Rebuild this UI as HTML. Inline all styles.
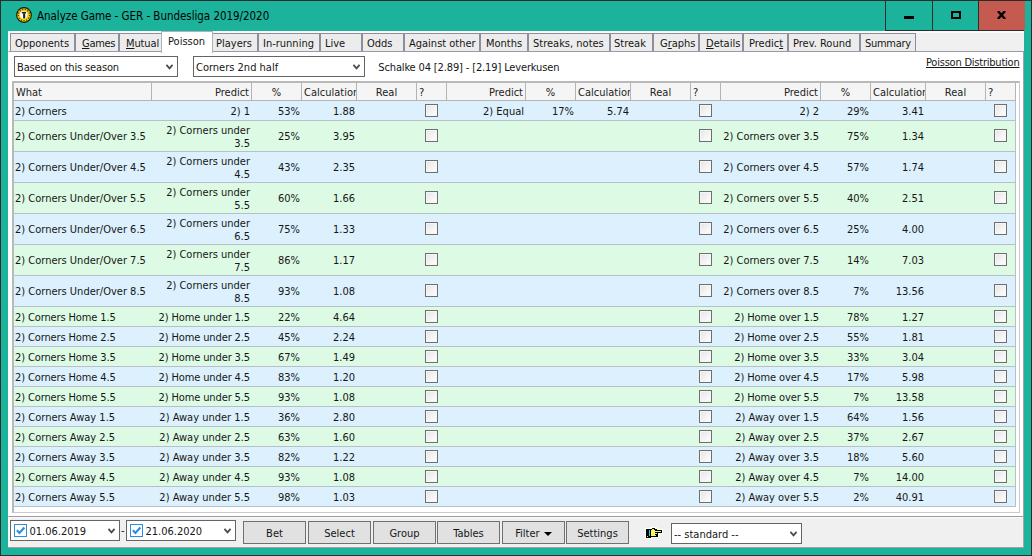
<!DOCTYPE html><html><head><meta charset="utf-8"><title>Analyze Game</title><style>
*{box-sizing:border-box;margin:0;padding:0}
html,body{width:1032px;height:556px;overflow:hidden}
body{background:#1bb39b;font-family:"DejaVu Sans Condensed","Liberation Sans",sans-serif;font-size:11px;color:#161616;position:relative}
.abs{position:absolute}
#frame{position:absolute;left:0;top:0;width:1032px;height:556px;border:1px solid #2c2c2c}
#title{color:#000;position:absolute;left:37px;top:8px;font-size:11.5px;line-height:16px;white-space:nowrap;letter-spacing:-0.04px}
#client{position:absolute;left:8px;top:31px;width:1016px;height:517px;background:#f0f0f0}
.tab{position:absolute;top:2px;height:19px;border:1px solid #8d8d9b;border-bottom:none;background:#ececec;line-height:17px;text-align:left;white-space:nowrap;padding-top:1px;overflow:hidden}
.tab.sel{top:0;height:22px;background:#fff;z-index:3;border-color:#b0b0b8;line-height:18px}
#page{position:absolute;left:0;top:20px;width:1016px;height:466px;background:#fff;border-top:1px solid #9a9aa6;border-bottom:1px solid #9a9aa6;border-left:1px solid #fff;border-right:1px solid #a2a2aa}
.combo{position:absolute;height:21px;border:1px solid #646464;background:#fff;line-height:21px;padding-left:2px;white-space:nowrap}
.combo svg{position:absolute;right:4px;top:7px}
u{text-decoration:underline}
#grid{position:absolute;left:4px;top:50px;width:1008px;height:432px;border:2px solid #b9b9b9;border-right:1px solid #c9c9c9;border-bottom:1px solid #c9c9c9;background:#fff}
#gridin{position:absolute;left:0;top:0;width:1005px;height:429px;overflow:hidden}
.hc{position:absolute;top:0;height:18px;background:#f5f5f5;border-right:1px solid #b4b4b4;border-bottom:1px solid #b4b4b4;line-height:19px;white-space:nowrap;overflow:hidden;padding:0 2px;color:#222}
.row{position:absolute;left:0;width:1002px;border-bottom:1px solid #b9bfc6;border-right:1px solid #b9bfc6}
.row.b{background:#dcf1fd}
.row.g{background:#ddfbe4}
.c{position:absolute;line-height:13px;padding:0 2px 0 1px;white-space:nowrap}
.ls{letter-spacing:-0.12px}
.c.r{text-align:right}
.c.l{text-align:left}
.cb{position:absolute;width:13px;height:13px;border:1px solid #6f6f6f;background:linear-gradient(135deg,#e4e4e4 0%,#f4f4f4 55%,#fff 100%);box-shadow:inset 0 0 0 1px #f6f6f6}
.btn{position:absolute;top:490px;height:23px;width:63px;border:1px solid #707070;background:#e1e1e1;text-align:center;line-height:23px}
.date{position:absolute;top:489px;height:21px;width:110px;border:1px solid #646464;background:#fff;line-height:21px;padding-left:18.5px;white-space:nowrap}
.dcb{position:absolute;left:3px;top:3px;width:13px;height:13px;border:1px solid #2b8de0;background:#fff}
</style></head><body>
<div id="frame"></div>
<svg class="abs" style="left:16px;top:7px" width="16" height="16" viewBox="0 0 16 16">
<circle cx="8" cy="8" r="7.9" fill="#15130a"/>
<circle cx="8" cy="8" r="6.8" fill="#f4c802"/>
<circle cx="8" cy="8" r="5.7" fill="none" stroke="#4a3800" stroke-width="1.4" stroke-dasharray="1.1 1.6"/>
<circle cx="7.6" cy="7.8" r="3.9" fill="#fff"/>
<rect x="5.8" y="4.9" width="4.2" height="1.6" fill="#222"/>
<rect x="7.1" y="6.3" width="2.1" height="5.1" fill="#222"/>
</svg>
<div id="title">Analyze Game - GER - Bundesliga 2019/2020</div>
<div class="abs" style="left:885px;top:1px;width:139px;height:30px;border-left:1px solid #2c2c2c;border-bottom:1px solid #2c2c2c"></div>
<div class="abs" style="left:932px;top:1px;width:1px;height:29px;background:#2c2c2c"></div>
<div class="abs" style="left:978px;top:1px;width:1px;height:29px;background:#2c2c2c"></div>
<div class="abs" style="left:979px;top:1px;width:46px;height:29px;background:#c55a50"></div>
<div class="abs" style="left:904px;top:16px;width:10px;height:3px;background:#000"></div>
<div class="abs" style="left:951px;top:11px;width:10px;height:8px;border:2px solid #000"></div>
<svg class="abs" style="left:997px;top:11px" width="9" height="8" viewBox="0 0 9 8"><path d="M0.9 0 L8.1 8 M8.1 0 L0.9 8" stroke="#000" stroke-width="2.4" fill="none"/></svg>
<div id="client">
<div class="abs" style="left:0;top:0;width:1016px;height:2px;background:#fafafa"></div>
<div class="abs" style="left:0;top:0;width:2px;height:517px;background:#fafafa"></div>
<div class="abs" style="left:0;top:516px;width:1016px;height:1px;background:#a0a0a0"></div>
<div class="abs" style="left:1015px;top:486px;width:1px;height:31px;background:#a6a6a6"></div>
<div class="abs" style="left:2px;top:486px;width:1013px;height:1px;background:#fbfbfb"></div>
<div class="tab" style="left:2px;width:65px;padding-left:4px">Opponents</div>
<div class="tab" style="left:67px;width:44px;padding-left:6px"><span style="letter-spacing:-0.3px"><u>G</u>ames</span></div>
<div class="tab" style="left:111px;width:44px;padding-left:6px"><span style="letter-spacing:-0.12px"><u>M</u>utual</span></div>
<div class="tab" style="left:203px;width:47px;padding-left:4px">Players</div>
<div class="tab" style="left:250px;width:62px;padding-left:4px">In-running</div>
<div class="tab" style="left:312px;width:42px;padding-left:4px">Live</div>
<div class="tab" style="left:354px;width:42px;padding-left:4px">Odds</div>
<div class="tab" style="left:396px;width:76px;padding-left:4px">Against other</div>
<div class="tab" style="left:472px;width:48px;padding-left:5px">Months</div>
<div class="tab" style="left:520px;width:82px;padding-left:4px">Streaks, notes</div>
<div class="tab" style="left:602px;width:43px;padding-left:3px">Streak</div>
<div class="tab" style="left:645px;width:46px;padding-left:6px">G<u>r</u>aphs</div>
<div class="tab" style="left:691px;width:44px;padding-left:6px"><u>D</u>etails</div>
<div class="tab" style="left:735px;width:45px;padding-left:5px">Predic<u>t</u></div>
<div class="tab" style="left:780px;width:72px;padding-left:4px">Prev. Round</div>
<div class="tab" style="left:852px;width:56px;padding-left:4px"><span style="letter-spacing:-0.3px">Summary</span></div>
<div id="page">
</div>
<div class="tab sel" style="left:153px;width:52px;padding-left:6px">Poisson</div>
<div class="combo" style="left:6px;top:25px;width:164px"><span style="letter-spacing:-0.15px">Based on this season</span><svg width="7" height="6" viewBox="0 0 7 6"><path d="M0.4 0.8 L3.5 4.3 L6.6 0.8" fill="none" stroke="#4a4a4a" stroke-width="1.8"/></svg></div>
<div class="combo" style="left:185px;top:25px;width:172px">Corners 2nd half<svg width="7" height="6" viewBox="0 0 7 6"><path d="M0.4 0.8 L3.5 4.3 L6.6 0.8" fill="none" stroke="#4a4a4a" stroke-width="1.8"/></svg></div>
<div class="abs" style="left:370.3px;top:30px;white-space:nowrap;line-height:13px;letter-spacing:-0.14px">Schalke 04 [2.89] - [2.19] Leverkusen</div>
<div class="abs" style="left:918px;top:25px;white-space:nowrap;line-height:13px;text-decoration:underline;letter-spacing:-0.22px">Poisson Distribution</div>
<div id="grid"><div id="gridin">
<div class="hc" style="left:0px;width:138px;text-align:left">What</div>
<div class="hc" style="left:138px;width:100px;text-align:right">Predict</div>
<div class="hc" style="left:238px;width:50px;text-align:center">%</div>
<div class="hc" style="left:288px;width:55px;text-align:left">Calculation</div>
<div class="hc" style="left:343px;width:60px;text-align:center">Real</div>
<div class="hc" style="left:403px;width:30px;text-align:left">?</div>
<div class="hc" style="left:433px;width:79px;text-align:right">Predict</div>
<div class="hc" style="left:512px;width:50px;text-align:center">%</div>
<div class="hc" style="left:562px;width:55px;text-align:left">Calculation</div>
<div class="hc" style="left:617px;width:60px;text-align:center">Real</div>
<div class="hc" style="left:677px;width:30px;text-align:left">?</div>
<div class="hc" style="left:707px;width:100px;text-align:right">Predict</div>
<div class="hc" style="left:807px;width:50px;text-align:center">%</div>
<div class="hc" style="left:857px;width:55px;text-align:left">Calculation</div>
<div class="hc" style="left:912px;width:60px;text-align:center">Real</div>
<div class="hc" style="left:972px;width:30px;text-align:left">?</div>
<div class="row b" style="top:18px;height:20px">
<div class="c l" style="left:0px;width:138px;top:4px">2) Corners</div>
<div class="c r" style="left:138px;width:100px;top:4px">2) 1</div>
<div class="c r" style="left:238px;width:50px;top:4px">53%</div>
<div class="c r" style="left:288px;width:55px;top:4px">1.88</div>
<div class="c r" style="left:433px;width:79px;top:4px">2) Equal</div>
<div class="c r" style="left:512px;width:50px;top:4px">17%</div>
<div class="c r" style="left:562px;width:55px;top:4px">5.74</div>
<div class="c r" style="left:707px;width:100px;top:4px">2) 2</div>
<div class="c r" style="left:807px;width:50px;top:4px">29%</div>
<div class="c r" style="left:857px;width:55px;top:4px">3.41</div>
<div class="cb" style="left:411px;top:3px"></div>
<div class="cb" style="left:685px;top:3px"></div>
<div class="cb" style="left:980px;top:3px"></div>
</div>
<div class="row g" style="top:38px;height:31px">
<div class="c l" style="left:0px;width:138px;top:9px">2) Corners Under/Over 3.5</div>
<div class="c r" style="left:138px;width:100px;top:3px">2) Corners under<br>3.5</div>
<div class="c r" style="left:238px;width:50px;top:9px">25%</div>
<div class="c r" style="left:288px;width:55px;top:9px">3.95</div>
<div class="c r" style="left:707px;width:100px;top:9px">2) Corners over 3.5</div>
<div class="c r" style="left:807px;width:50px;top:9px">75%</div>
<div class="c r" style="left:857px;width:55px;top:9px">1.34</div>
<div class="cb" style="left:411px;top:8px"></div>
<div class="cb" style="left:685px;top:8px"></div>
<div class="cb" style="left:980px;top:8px"></div>
</div>
<div class="row b" style="top:69px;height:31px">
<div class="c l" style="left:0px;width:138px;top:9px">2) Corners Under/Over 4.5</div>
<div class="c r" style="left:138px;width:100px;top:3px">2) Corners under<br>4.5</div>
<div class="c r" style="left:238px;width:50px;top:9px">43%</div>
<div class="c r" style="left:288px;width:55px;top:9px">2.35</div>
<div class="c r" style="left:707px;width:100px;top:9px">2) Corners over 4.5</div>
<div class="c r" style="left:807px;width:50px;top:9px">57%</div>
<div class="c r" style="left:857px;width:55px;top:9px">1.74</div>
<div class="cb" style="left:411px;top:8px"></div>
<div class="cb" style="left:685px;top:8px"></div>
<div class="cb" style="left:980px;top:8px"></div>
</div>
<div class="row g" style="top:100px;height:31px">
<div class="c l" style="left:0px;width:138px;top:9px">2) Corners Under/Over 5.5</div>
<div class="c r" style="left:138px;width:100px;top:3px">2) Corners under<br>5.5</div>
<div class="c r" style="left:238px;width:50px;top:9px">60%</div>
<div class="c r" style="left:288px;width:55px;top:9px">1.66</div>
<div class="c r" style="left:707px;width:100px;top:9px">2) Corners over 5.5</div>
<div class="c r" style="left:807px;width:50px;top:9px">40%</div>
<div class="c r" style="left:857px;width:55px;top:9px">2.51</div>
<div class="cb" style="left:411px;top:8px"></div>
<div class="cb" style="left:685px;top:8px"></div>
<div class="cb" style="left:980px;top:8px"></div>
</div>
<div class="row b" style="top:131px;height:31px">
<div class="c l" style="left:0px;width:138px;top:9px">2) Corners Under/Over 6.5</div>
<div class="c r" style="left:138px;width:100px;top:3px">2) Corners under<br>6.5</div>
<div class="c r" style="left:238px;width:50px;top:9px">75%</div>
<div class="c r" style="left:288px;width:55px;top:9px">1.33</div>
<div class="c r" style="left:707px;width:100px;top:9px">2) Corners over 6.5</div>
<div class="c r" style="left:807px;width:50px;top:9px">25%</div>
<div class="c r" style="left:857px;width:55px;top:9px">4.00</div>
<div class="cb" style="left:411px;top:8px"></div>
<div class="cb" style="left:685px;top:8px"></div>
<div class="cb" style="left:980px;top:8px"></div>
</div>
<div class="row g" style="top:162px;height:31px">
<div class="c l" style="left:0px;width:138px;top:9px">2) Corners Under/Over 7.5</div>
<div class="c r" style="left:138px;width:100px;top:3px">2) Corners under<br>7.5</div>
<div class="c r" style="left:238px;width:50px;top:9px">86%</div>
<div class="c r" style="left:288px;width:55px;top:9px">1.17</div>
<div class="c r" style="left:707px;width:100px;top:9px">2) Corners over 7.5</div>
<div class="c r" style="left:807px;width:50px;top:9px">14%</div>
<div class="c r" style="left:857px;width:55px;top:9px">7.03</div>
<div class="cb" style="left:411px;top:8px"></div>
<div class="cb" style="left:685px;top:8px"></div>
<div class="cb" style="left:980px;top:8px"></div>
</div>
<div class="row b" style="top:193px;height:31px">
<div class="c l" style="left:0px;width:138px;top:9px">2) Corners Under/Over 8.5</div>
<div class="c r" style="left:138px;width:100px;top:3px">2) Corners under<br>8.5</div>
<div class="c r" style="left:238px;width:50px;top:9px">93%</div>
<div class="c r" style="left:288px;width:55px;top:9px">1.08</div>
<div class="c r" style="left:707px;width:100px;top:9px">2) Corners over 8.5</div>
<div class="c r" style="left:807px;width:50px;top:9px">7%</div>
<div class="c r" style="left:857px;width:55px;top:9px">13.56</div>
<div class="cb" style="left:411px;top:8px"></div>
<div class="cb" style="left:685px;top:8px"></div>
<div class="cb" style="left:980px;top:8px"></div>
</div>
<div class="row g" style="top:224px;height:20px">
<div class="c l ls" style="left:0px;width:138px;top:4px">2) Corners Home 1.5</div>
<div class="c r ls" style="left:138px;width:100px;top:4px">2) Home under 1.5</div>
<div class="c r" style="left:238px;width:50px;top:4px">22%</div>
<div class="c r" style="left:288px;width:55px;top:4px">4.64</div>
<div class="c r ls" style="left:707px;width:100px;top:4px">2) Home over 1.5</div>
<div class="c r" style="left:807px;width:50px;top:4px">78%</div>
<div class="c r" style="left:857px;width:55px;top:4px">1.27</div>
<div class="cb" style="left:411px;top:3px"></div>
<div class="cb" style="left:685px;top:3px"></div>
<div class="cb" style="left:980px;top:3px"></div>
</div>
<div class="row b" style="top:244px;height:20px">
<div class="c l ls" style="left:0px;width:138px;top:4px">2) Corners Home 2.5</div>
<div class="c r ls" style="left:138px;width:100px;top:4px">2) Home under 2.5</div>
<div class="c r" style="left:238px;width:50px;top:4px">45%</div>
<div class="c r" style="left:288px;width:55px;top:4px">2.24</div>
<div class="c r ls" style="left:707px;width:100px;top:4px">2) Home over 2.5</div>
<div class="c r" style="left:807px;width:50px;top:4px">55%</div>
<div class="c r" style="left:857px;width:55px;top:4px">1.81</div>
<div class="cb" style="left:411px;top:3px"></div>
<div class="cb" style="left:685px;top:3px"></div>
<div class="cb" style="left:980px;top:3px"></div>
</div>
<div class="row g" style="top:264px;height:20px">
<div class="c l ls" style="left:0px;width:138px;top:4px">2) Corners Home 3.5</div>
<div class="c r ls" style="left:138px;width:100px;top:4px">2) Home under 3.5</div>
<div class="c r" style="left:238px;width:50px;top:4px">67%</div>
<div class="c r" style="left:288px;width:55px;top:4px">1.49</div>
<div class="c r ls" style="left:707px;width:100px;top:4px">2) Home over 3.5</div>
<div class="c r" style="left:807px;width:50px;top:4px">33%</div>
<div class="c r" style="left:857px;width:55px;top:4px">3.04</div>
<div class="cb" style="left:411px;top:3px"></div>
<div class="cb" style="left:685px;top:3px"></div>
<div class="cb" style="left:980px;top:3px"></div>
</div>
<div class="row b" style="top:284px;height:20px">
<div class="c l ls" style="left:0px;width:138px;top:4px">2) Corners Home 4.5</div>
<div class="c r ls" style="left:138px;width:100px;top:4px">2) Home under 4.5</div>
<div class="c r" style="left:238px;width:50px;top:4px">83%</div>
<div class="c r" style="left:288px;width:55px;top:4px">1.20</div>
<div class="c r ls" style="left:707px;width:100px;top:4px">2) Home over 4.5</div>
<div class="c r" style="left:807px;width:50px;top:4px">17%</div>
<div class="c r" style="left:857px;width:55px;top:4px">5.98</div>
<div class="cb" style="left:411px;top:3px"></div>
<div class="cb" style="left:685px;top:3px"></div>
<div class="cb" style="left:980px;top:3px"></div>
</div>
<div class="row g" style="top:304px;height:20px">
<div class="c l ls" style="left:0px;width:138px;top:4px">2) Corners Home 5.5</div>
<div class="c r ls" style="left:138px;width:100px;top:4px">2) Home under 5.5</div>
<div class="c r" style="left:238px;width:50px;top:4px">93%</div>
<div class="c r" style="left:288px;width:55px;top:4px">1.08</div>
<div class="c r ls" style="left:707px;width:100px;top:4px">2) Home over 5.5</div>
<div class="c r" style="left:807px;width:50px;top:4px">7%</div>
<div class="c r" style="left:857px;width:55px;top:4px">13.58</div>
<div class="cb" style="left:411px;top:3px"></div>
<div class="cb" style="left:685px;top:3px"></div>
<div class="cb" style="left:980px;top:3px"></div>
</div>
<div class="row b" style="top:324px;height:20px">
<div class="c l" style="left:0px;width:138px;top:4px">2) Corners Away 1.5</div>
<div class="c r" style="left:138px;width:100px;top:4px">2) Away under 1.5</div>
<div class="c r" style="left:238px;width:50px;top:4px">36%</div>
<div class="c r" style="left:288px;width:55px;top:4px">2.80</div>
<div class="c r" style="left:707px;width:100px;top:4px">2) Away over 1.5</div>
<div class="c r" style="left:807px;width:50px;top:4px">64%</div>
<div class="c r" style="left:857px;width:55px;top:4px">1.56</div>
<div class="cb" style="left:411px;top:3px"></div>
<div class="cb" style="left:685px;top:3px"></div>
<div class="cb" style="left:980px;top:3px"></div>
</div>
<div class="row g" style="top:344px;height:20px">
<div class="c l" style="left:0px;width:138px;top:4px">2) Corners Away 2.5</div>
<div class="c r" style="left:138px;width:100px;top:4px">2) Away under 2.5</div>
<div class="c r" style="left:238px;width:50px;top:4px">63%</div>
<div class="c r" style="left:288px;width:55px;top:4px">1.60</div>
<div class="c r" style="left:707px;width:100px;top:4px">2) Away over 2.5</div>
<div class="c r" style="left:807px;width:50px;top:4px">37%</div>
<div class="c r" style="left:857px;width:55px;top:4px">2.67</div>
<div class="cb" style="left:411px;top:3px"></div>
<div class="cb" style="left:685px;top:3px"></div>
<div class="cb" style="left:980px;top:3px"></div>
</div>
<div class="row b" style="top:364px;height:20px">
<div class="c l" style="left:0px;width:138px;top:4px">2) Corners Away 3.5</div>
<div class="c r" style="left:138px;width:100px;top:4px">2) Away under 3.5</div>
<div class="c r" style="left:238px;width:50px;top:4px">82%</div>
<div class="c r" style="left:288px;width:55px;top:4px">1.22</div>
<div class="c r" style="left:707px;width:100px;top:4px">2) Away over 3.5</div>
<div class="c r" style="left:807px;width:50px;top:4px">18%</div>
<div class="c r" style="left:857px;width:55px;top:4px">5.60</div>
<div class="cb" style="left:411px;top:3px"></div>
<div class="cb" style="left:685px;top:3px"></div>
<div class="cb" style="left:980px;top:3px"></div>
</div>
<div class="row g" style="top:384px;height:20px">
<div class="c l" style="left:0px;width:138px;top:4px">2) Corners Away 4.5</div>
<div class="c r" style="left:138px;width:100px;top:4px">2) Away under 4.5</div>
<div class="c r" style="left:238px;width:50px;top:4px">93%</div>
<div class="c r" style="left:288px;width:55px;top:4px">1.08</div>
<div class="c r" style="left:707px;width:100px;top:4px">2) Away over 4.5</div>
<div class="c r" style="left:807px;width:50px;top:4px">7%</div>
<div class="c r" style="left:857px;width:55px;top:4px">14.00</div>
<div class="cb" style="left:411px;top:3px"></div>
<div class="cb" style="left:685px;top:3px"></div>
<div class="cb" style="left:980px;top:3px"></div>
</div>
<div class="row b" style="top:404px;height:20px">
<div class="c l" style="left:0px;width:138px;top:4px">2) Corners Away 5.5</div>
<div class="c r" style="left:138px;width:100px;top:4px">2) Away under 5.5</div>
<div class="c r" style="left:238px;width:50px;top:4px">98%</div>
<div class="c r" style="left:288px;width:55px;top:4px">1.03</div>
<div class="c r" style="left:707px;width:100px;top:4px">2) Away over 5.5</div>
<div class="c r" style="left:807px;width:50px;top:4px">2%</div>
<div class="c r" style="left:857px;width:55px;top:4px">40.91</div>
<div class="cb" style="left:411px;top:3px"></div>
<div class="cb" style="left:685px;top:3px"></div>
<div class="cb" style="left:980px;top:3px"></div>
</div>
</div></div>
<div class="date" style="left:2px"><div class="dcb"><svg width="11" height="11" viewBox="0 0 11 11" style="position:absolute;left:0;top:0"><path d="M1.9 5.3 L4.4 7.9 L9.4 2.5" fill="none" stroke="#2b90e2" stroke-width="2.2"/></svg></div>01.06.2019<span style="position:absolute;right:4px;top:7px;line-height:0"><svg width="7" height="6" viewBox="0 0 7 6"><path d="M0.4 0.8 L3.5 4.3 L6.6 0.8" fill="none" stroke="#4a4a4a" stroke-width="1.8"/></svg></span></div>
<div class="abs" style="left:113px;top:493px;line-height:13px">-</div>
<div class="date" style="left:118px"><div class="dcb"><svg width="11" height="11" viewBox="0 0 11 11" style="position:absolute;left:0;top:0"><path d="M1.9 5.3 L4.4 7.9 L9.4 2.5" fill="none" stroke="#2b90e2" stroke-width="2.2"/></svg></div>21.06.2020<span style="position:absolute;right:4px;top:7px;line-height:0"><svg width="7" height="6" viewBox="0 0 7 6"><path d="M0.4 0.8 L3.5 4.3 L6.6 0.8" fill="none" stroke="#4a4a4a" stroke-width="1.8"/></svg></span></div>
<div class="btn" style="left:235px">Bet</div>
<div class="btn" style="left:300px">Select</div>
<div class="btn" style="left:365px">Group</div>
<div class="btn" style="left:429px">Tables</div>
<div class="btn" style="left:494px">Filter <span style="display:inline-block;width:0;height:0;border-left:4px solid transparent;border-right:4px solid transparent;border-top:4px solid #000;vertical-align:1px;margin-left:1px"></span></div>
<div class="btn" style="left:558px">Settings</div>
<svg class="abs" style="left:637px;top:496px" width="19" height="12" viewBox="-1 -1 19 12" shape-rendering="crispEdges">
<g fill="#fff"><rect x="-1" y="0" width="7" height="11"/><rect x="4" y="-1" width="7" height="11"/><rect x="8" y="1" width="9" height="5"/><rect x="8" y="4" width="5" height="6"/></g>
<rect x="0" y="1" width="5" height="9" fill="#000"/>
<rect x="3" y="2" width="1" height="6" fill="#00dede"/>
<rect x="1" y="8" width="1" height="1" fill="#f5e800"/>
<rect x="6" y="0" width="3" height="1" fill="#000"/>
<rect x="5" y="1" width="6" height="8" fill="#000"/>
<rect x="9" y="2" width="7" height="3" fill="#000"/>
<rect x="8" y="4" width="4" height="5" fill="#000"/>
<rect x="5" y="2" width="4" height="6" fill="#f9f36b"/>
<rect x="6" y="1" width="2" height="1" fill="#f9f36b"/>
<rect x="9" y="3" width="6" height="1" fill="#f9f36b"/>
<rect x="9" y="5" width="2" height="1" fill="#f9f36b"/>
<rect x="9" y="7" width="1" height="1" fill="#f9f36b"/>
</svg>
<div class="combo" style="left:663px;top:492px;width:131px">-- standard --<svg width="7" height="6" viewBox="0 0 7 6"><path d="M0.4 0.8 L3.5 4.3 L6.6 0.8" fill="none" stroke="#4a4a4a" stroke-width="1.8"/></svg></div>
</div>
</body></html>
